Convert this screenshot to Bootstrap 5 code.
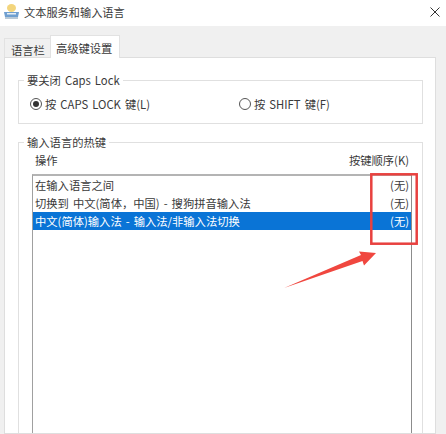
<!DOCTYPE html>
<html lang="zh-CN">
<head>
<meta charset="utf-8">
<title>文本服务和输入语言</title>
<link href="https://cdn.jsdelivr.net/npm/bootstrap@5.3.0/dist/css/bootstrap.min.css" rel="stylesheet">
<style>
html,body{height:434px;overflow:hidden}
body{width:446px;background:#f0f0f0;font-family:"Noto Sans CJK SC","Noto Sans",sans-serif;font-size:11.3px;line-height:16px;color:#3a3a3a;position:relative;word-spacing:1.5px}
.title-strip{height:26px;background:#fff;padding:0 6px 3px 4px}
.title-text{font-size:11.2px;margin-left:5px}
.tab-row{height:31px;padding:9px 0 0 4px;background:#f0f0f0}
.tab-item{padding:3px 5px 0 6px;background:#f0f0f0;border:1px solid #e2e2e2;border-bottom:0;margin-top:3px;height:19px}
.tab-item.on{background:#fff;margin-top:0;height:23px;padding:4px 7px 0 5px;position:relative;margin-left:-1px;z-index:1}
.page-panel{height:377px;margin:0 10px 0 4px;background:#fff;border:1px solid #dedede;padding:22px 12px 0 13px;overflow:hidden}
.grp{border:1px solid #e0e0e0;position:relative}
.grp-a{height:44px;padding:3px 0 0 11px}
.grp-b{height:320px;margin-top:18px;padding:8px 10px 0 13px}
.grp-cap{position:absolute;top:-9px;left:5px;background:#fff;padding:0 3px;white-space:nowrap}
.rad{width:12px;height:12px;border:1px solid #555;border-radius:50%;margin-right:3px;flex:none;display:flex;align-items:center;justify-content:center}
.rad i{display:block;width:6px;height:6px;border-radius:50%;background:#333}
.opt-one{width:209px}
.head-row{height:23px;padding:0 3px 5px 3px}
.list-box{height:300px;border:1px solid #a0a0a0;border-top:2px solid #b4b4b4;border-right-color:#8c8c8c}
.list-line{height:18px;padding:0 2px 0 2px;line-height:18px}
.list-line.sel{background:#0a74d6;color:#fff}
.mark-layer{position:absolute;left:0;top:0;pointer-events:none}
</style>
</head>
<body>
<div class="title-strip d-flex align-items-center">
  <svg width="15" height="15" viewBox="0 0 15 15">
    <ellipse cx="7.5" cy="4" rx="4.5" ry="4" fill="#f3d57c"/>
    <path d="M0 8h15l-1 5H1z" fill="#6f9fd0"/>
    <path d="M1 13h13v2H1z" fill="#b9c9d6"/>
    <path d="M3 9h9v1.5H3z" fill="#e6eef4"/>
  </svg>
  <span class="title-text">文本服务和输入语言</span>
  <svg width="10" height="10" viewBox="0 0 10 10" class="ms-auto"><path d="M.5.5l9 9M9.5.5l-9 9" stroke="#333" stroke-width="1" fill="none"/></svg>
</div>
<div class="tab-row d-flex align-items-start">
  <div class="tab-item">语言栏</div>
  <div class="tab-item on">高级键设置</div>
</div>
<div class="page-panel">
  <div class="grp grp-a d-flex align-items-center">
    <span class="grp-cap">要关闭 Caps Lock</span>
    <div class="d-flex align-items-center opt-one"><span class="rad"><i></i></span>按 CAPS LOCK 键(L)</div>
    <div class="d-flex align-items-center"><span class="rad"></span>按 SHIFT 键(F)</div>
  </div>
  <div class="grp grp-b">
    <span class="grp-cap">输入语言的热键</span>
    <div class="head-row d-flex justify-content-between align-items-center"><span>操作</span><span>按键顺序(K)</span></div>
    <div class="list-box">
      <div class="list-line d-flex justify-content-between"><span>在输入语言之间</span><span>(无)</span></div>
      <div class="list-line d-flex justify-content-between"><span>切换到 中文(简体，中国) - 搜狗拼音输入法</span><span>(无)</span></div>
      <div class="list-line sel d-flex justify-content-between"><span>中文(简体)输入法 - 输入法/非输入法切换</span><span>(无)</span></div>
    </div>
  </div>
</div>
<svg class="mark-layer" width="446" height="434" viewBox="0 0 446 434">
  <rect x="371.3" y="174.3" width="45.4" height="69.4" fill="none" stroke="#e8413f" stroke-width="2.5"/>
  <path d="M284 288L361 255L359 251.5L376 253L364 265.5L362.5 261Z" fill="#f0473f"/>
</svg>
</body>
</html>
